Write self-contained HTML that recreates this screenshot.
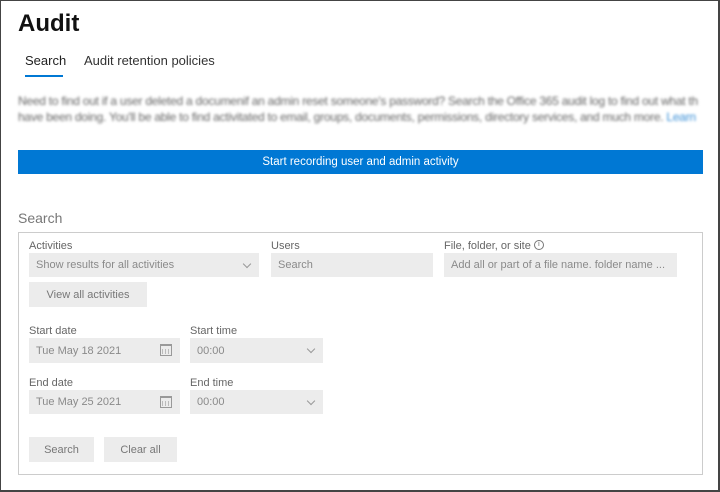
<!DOCTYPE html>
<html><head><style>
*{margin:0;padding:0;box-sizing:border-box}
body{width:720px;height:492px;background:#fff;font-family:"Liberation Sans",sans-serif;position:relative;overflow:hidden}
.frame{position:absolute;left:0;top:0;width:720px;height:492px;border:1px solid #444;border-right-width:2px;border-bottom-width:2px}
.a{position:absolute;white-space:nowrap}
.lbl{font-size:11px;color:#666}
.f{position:absolute;background:#ececec;font-size:11px;color:#8a8a8a;padding-left:7px;display:flex;align-items:center}
.chev{position:absolute;right:9px;top:8px;width:6px;height:6px;border-right:1px solid #999;border-bottom:1px solid #999;transform:rotate(45deg)}
.cal{position:absolute;right:8px;top:6px;width:12px;height:12px;border:1px solid #999;border-top-width:2px}
.cal:after{content:"";position:absolute;left:1px;right:1px;top:3px;bottom:1px;background:repeating-linear-gradient(90deg,#bbb 0 1px,transparent 1px 3px)}
.btn{position:absolute;background:#ececec;font-size:11px;color:#777;display:flex;align-items:center;justify-content:center}
</style></head><body>
<div class="frame"></div>
<div class="a" style="left:18px;top:10px;font-size:24px;font-weight:bold;color:#111">Audit</div>
<div class="a" style="left:25px;top:53px;font-size:13px;color:#222">Search</div>
<div style="position:absolute;left:25px;top:75px;width:38px;height:2px;background:#0078d4"></div>
<div class="a" style="left:84px;top:53px;font-size:13px;color:#333">Audit retention policies</div>
<div class="a" style="left:18px;top:93px;font-size:12px;line-height:16px;color:#666;filter:blur(1.3px);letter-spacing:-0.25px">Need to find out if a user deleted a documenif an admin reset someone's password? Search the Office 365 audit log to find out what th<br>have been doing. You'll be able to find activitated to email, groups, documents, permissions, directory services, and much more. <span style="color:#3a8fd6">Learn</span></div>
<div style="position:absolute;left:18px;top:150px;width:685px;height:24px;background:#0078d4;color:#fff;font-size:11.5px;display:flex;align-items:center;justify-content:center">Start recording user and admin activity</div>
<div class="a" style="left:18px;top:210px;font-size:14px;color:#777">Search</div>
<div style="position:absolute;left:18px;top:232px;width:685px;height:243px;border:1px solid #ccc"></div>
<div class="a lbl" style="left:29px;top:240px">Activities</div>
<div class="f" style="left:29px;top:253px;width:230px;height:24px">Show results for all activities<span class="chev"></span></div>
<div class="a lbl" style="left:271px;top:240px">Users</div>
<div class="f" style="left:271px;top:253px;width:162px;height:24px">Search</div>
<div class="a lbl" style="left:444px;top:240px">File, folder, or site <span style="display:inline-block;width:10px;height:10px;border:1px solid #777;border-radius:50%;font-size:7px;text-align:center;line-height:8px;vertical-align:top">i</span></div>
<div class="f" style="left:444px;top:253px;width:233px;height:24px">Add all or part of a file name. folder name ...</div>
<div class="btn" style="left:29px;top:282px;width:118px;height:25px">View all activities</div>
<div class="a lbl" style="left:29px;top:325px">Start date</div>
<div class="f" style="left:29px;top:338px;width:151px;height:25px">Tue May 18 2021<span class="cal"></span></div>
<div class="a lbl" style="left:190px;top:325px">Start time</div>
<div class="f" style="left:190px;top:338px;width:133px;height:25px">00:00<span class="chev"></span></div>
<div class="a lbl" style="left:29px;top:377px">End date</div>
<div class="f" style="left:29px;top:390px;width:151px;height:24px">Tue May 25 2021<span class="cal"></span></div>
<div class="a lbl" style="left:190px;top:377px">End time</div>
<div class="f" style="left:190px;top:390px;width:133px;height:24px">00:00<span class="chev"></span></div>
<div class="btn" style="left:29px;top:437px;width:65px;height:25px">Search</div>
<div class="btn" style="left:104px;top:437px;width:73px;height:25px">Clear all</div>
</body></html>
